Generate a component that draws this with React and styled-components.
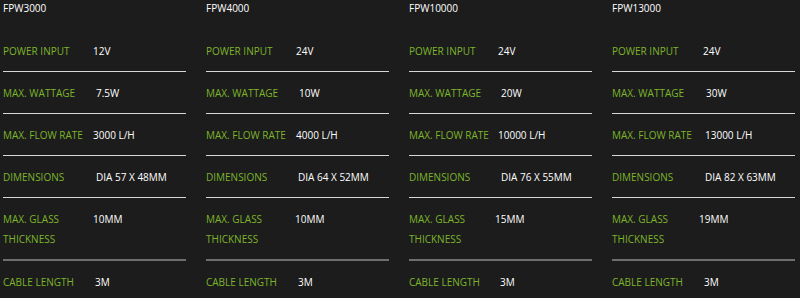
import React from "react";
import styled, { createGlobalStyle } from "styled-components";

const Global = createGlobalStyle`
  html, body {
    margin: 0;
    padding: 0;
    background: #1c1c1c;
  }
  body {
    font-family: "Open Sans", "Liberation Sans", sans-serif;
    -webkit-font-smoothing: antialiased;
  }
`;

const Page = styled.div`
  display: flex;
  gap: 20px;
  padding-left: 3px;
  width: 800px;
  height: 298px;
  overflow: hidden;
  box-sizing: border-box;
  background: #1c1c1c;
`;

const Column = styled.div`
  flex: 0 0 183px;
  display: flex;
  flex-direction: column;
`;

const Title = styled.div`
  color: #ffffff;
  font-size: 10px;
  line-height: 16px;
  margin-bottom: 14px;
`;

const Row = styled.div`
  display: flex;
  align-items: flex-start;
  padding: 11px 0 10px;
  border-bottom: ${(p) => (p.last ? "none" : p.thick ? "2px solid #6e6e6e" : "1px solid #d6d6d6")};
`;

const Label = styled.div`
  flex: 0 0 ${(p) => 90 + (p.shift || 0)}px;
  color: #7db52a;
  font-size: 10px;
  line-height: 20px;
  white-space: pre-line;
`;

const Value = styled.div`
  color: #ffffff;
  font-size: 10px;
  line-height: 20px;
  white-space: nowrap;
`;

const labels = [
  "POWER INPUT",
  "MAX. WATTAGE",
  "MAX. FLOW RATE",
  "DIMENSIONS",
  "MAX. GLASS\nTHICKNESS",
  "CABLE LENGTH",
];

const models = [
  {
    name: "FPW3000",
    values: ["12V", "7.5W", "3000 L/H", "DIA 57 X 48MM", "10MM", "3M"],
    shifts: [0, 3, 0, 3, 0, 2],
  },
  {
    name: "FPW4000",
    values: ["24V", "10W", "4000 L/H", "DIA 64 X 52MM", "10MM", "3M"],
    shifts: [0, 3, 0, 2, -1, 2],
  },
  {
    name: "FPW10000",
    values: ["24V", "20W", "10000 L/H", "DIA 76 X 55MM", "15MM", "3M"],
    shifts: [-1, 2, -1, 2, -4, 1],
  },
  {
    name: "FPW13000",
    values: ["24V", "30W", "13000 L/H", "DIA 82 X 63MM", "19MM", "3M"],
    shifts: [1, 4, 3, 3, -3, 2],
  },
];

export default function App() {
  return (
    <>
      <Global />
      <Page>
        {models.map((m) => (
          <Column key={m.name}>
            <Title>{m.name}</Title>
            {labels.map((label, i) => (
              <Row key={label} thick={i === 4} last={i === labels.length - 1}>
                <Label shift={m.shifts[i]}>{label}</Label>
                <Value>{m.values[i]}</Value>
              </Row>
            ))}
          </Column>
        ))}
      </Page>
    </>
  );
}
